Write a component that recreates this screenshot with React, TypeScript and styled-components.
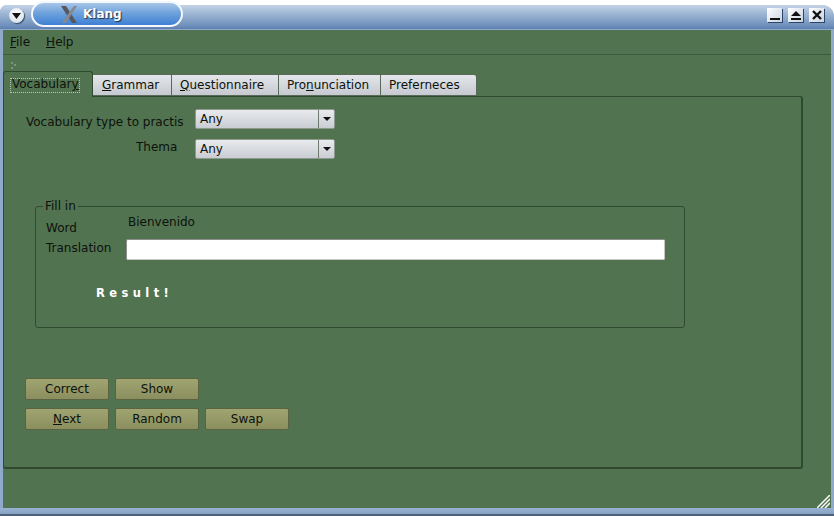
import styled, { createGlobalStyle } from "styled-components";

const GlobalStyle = createGlobalStyle`
  html, body {
    margin: 0;
    padding: 0;
    background: #ffffff;
  }

  body {
    font-family: "DejaVu Sans", sans-serif;
    font-size: 12px;
    color: #0c120c;
  }
`;

const Frame = styled.div`
  width: 834px;
  height: 511px;
  margin-top: 5px;
  display: flex;
  flex-direction: column;
  background: #8fa9cb;
  border-radius: 7px 12px 0 0;
`;

const TitleBar = styled.div`
  height: 24px;
  flex: none;
  display: flex;
  align-items: flex-start;
  padding: 0 10px 0 9px;
  box-sizing: border-box;
  border-radius: 7px 12px 0 0;
  background: linear-gradient(#c4d3e6 0, #a9bfda 6px, #6e8fbb 21px, #5d7fae 24px);
`;

const MenuButton = styled.div`
  width: 15px;
  height: 15px;
  margin-top: 3px;
  flex: none;
  border-radius: 50%;
  display: flex;
  align-items: center;
  justify-content: center;
  background: radial-gradient(circle at 50% 35%, #ffffff, #cfd8e4);
  box-shadow: 1px 1px 1px #334a66;
`;

const TitlePill = styled.div`
  width: 152px;
  height: 26px;
  margin: -4px 0 0 7px;
  flex: none;
  box-sizing: border-box;
  display: flex;
  align-items: center;
  gap: 5px;
  padding: 0 0 0 27px;
  border: 2px solid #f4f8fc;
  border-radius: 13px;
  background: linear-gradient(#a8c6e8, #6ea2dc 45%, #3f80d4);
`;

const TitleText = styled.span`
  font-weight: bold;
  color: #ffffff;
  font-size: 12px;
  text-shadow: 1px 1px 1px #1c2c44;
`;

const TitleButtons = styled.div`
  margin-left: auto;
  display: flex;
  gap: 6px;
  padding-top: 3px;
`;

const TitleButton = styled.div`
  width: 15px;
  height: 14px;
  display: flex;
  align-items: center;
  justify-content: center;
  background: linear-gradient(135deg, #ffffff, #c8d3e2);
  box-shadow: 1px 1px 0 #2d4668;
`;

const Client = styled.div`
  flex: 1;
  margin: 1px 3px 0 3px;
  display: flex;
  flex-direction: column;
  background: #527350;
  min-height: 0;
`;

const MenuBar = styled.div`
  height: 25px;
  flex: none;
  display: flex;
  align-items: center;
  gap: 16px;
  padding: 0 0 0 7px;
  box-sizing: border-box;
  border-bottom: 1px solid #3d5a3c;
`;

const MenuItem = styled.span`
  font-size: 12px;
`;

const Key = styled.span`
  text-decoration: underline;
`;

const ToolHandle = styled.div`
  height: 16px;
  flex: none;
  padding: 4px 0 0 7px;
  box-sizing: border-box;
`;

const TabRow = styled.div`
  display: flex;
  align-items: flex-end;
  height: 26px;
  flex: none;
  margin-bottom: -1px;
  position: relative;
  z-index: 1;
`;

const ActiveTab = styled.div`
  width: 90px;
  height: 26px;
  box-sizing: border-box;
  padding: 6px 0 0 6px;
  background: #527350;
  border: 1px solid #2f4a2f;
  border-bottom: none;
  border-radius: 3px 3px 0 0;
`;

const FocusBox = styled.span`
  display: block;
  height: 15px;
  line-height: 10px;
  padding-left: 1px;
  border: 1px dotted #b9c4b4;
  box-sizing: border-box;
  width: 70px;
  white-space: nowrap;
`;

const Tab = styled.div<{ $w: number; $pad: number }>`
  width: ${({ $w }) => $w}px;
  height: 22px;
  margin-bottom: 1px;
  box-sizing: border-box;
  display: flex;
  align-items: center;
  padding-left: ${({ $pad }) => $pad}px;
  background: linear-gradient(#e4e6ea, #c6c9cf);
  border: 1px solid #5a6a5a;
  border-left: none;

  &:last-child {
    border-radius: 0 3px 0 0;
  }
`;

const Panel = styled.div`
  width: 800px;
  height: 373px;
  flex: none;
  box-sizing: border-box;
  padding: 12px 0 0 21px;
  border: 1px solid #2f4a2f;
  border-right-width: 2px;
  border-bottom-width: 2px;
  border-radius: 0 3px 3px 3px;
`;

const FormGrid = styled.div`
  display: grid;
  grid-template-columns: 169px 140px;
  grid-auto-rows: 20px;
  row-gap: 10px;
  margin-left: 1px;
`;

const FieldLabel = styled.div<{ $indent: number; $raise: number }>`
  padding-left: ${({ $indent }) => $indent}px;
  padding-top: ${({ $raise }) => $raise}px;
  white-space: nowrap;
`;

const Combo = styled.div`
  height: 20px;
  box-sizing: border-box;
  display: flex;
  background: linear-gradient(#e9ebee, #c9ccd2);
  border: 1px solid #8f9a8f;
  border-radius: 2px;
`;

const ComboText = styled.span`
  flex: 1;
  padding: 2px 0 0 4px;
`;

const ComboArrow = styled.span`
  width: 15px;
  border-left: 1px solid #6f7a6f;
  display: flex;
  align-items: center;
  justify-content: center;
`;

const Group = styled.fieldset`
  width: 650px;
  height: 129px;
  margin: 40px 0 0 10px;
  padding: 0;
  box-sizing: border-box;
  border: 1px solid #2f4a2f;
  border-radius: 3px;
  display: block;
`;

const Legend = styled.legend`
  margin-left: 7px;
  padding: 0 2px;
  font-size: 12px;
  line-height: 14px;
`;

const GroupBody = styled.div`
  display: grid;
  grid-template-columns: 80px 539px;
  padding: 0 0 0 10px;
`;

const GroupLabel = styled.div<{ $top: number }>`
  padding-top: ${({ $top }) => $top}px;
  white-space: nowrap;
`;

const WordValue = styled.div`
  padding-top: 2px;
  height: 26px;
  box-sizing: border-box;
  padding-left: 2px;
`;

const TextInput = styled.div`
  height: 21px;
  box-sizing: border-box;
  background: #ffffff;
  border: 1px solid #8d8d8d;
  border-right-color: #c8c8c8;
  border-bottom-color: #c8c8c8;
  border-radius: 2px;
`;

const Result = styled.div`
  grid-column: 1 / 3;
  padding: 26px 0 0 50px;
  font-weight: bold;
  color: #ffffff;
  font-size: 11.5px;
  letter-spacing: 4.4px;
`;

const ButtonStack = styled.div`
  display: flex;
  flex-direction: column;
  gap: 8px;
  margin: 50px 0 0 0;
`;

const ButtonRow = styled.div`
  display: flex;
  gap: 6px;
`;

const ActionButton = styled.button`
  width: 84px;
  height: 22px;
  padding: 0;
  font: inherit;
  color: inherit;
  background: linear-gradient(#a0a470, #8b8f5f);
  border: 1px solid #5c6340;
  border-radius: 2px;
`;

const BottomBorder = styled.div`
  height: 8px;
  flex: none;
  background: linear-gradient(#9ab2d2 0, #86a2c6 6px, #4d6078 6px);
`;

const GripSpot = styled.div`
  height: 0;
  display: flex;
  justify-content: flex-end;
`;

const Grip = styled.svg`
  position: relative;
  top: -13px;
  right: 4px;
  flex: none;
`;

function App() {
  return (
    <>
      <GlobalStyle />
      <Frame>
        <TitleBar>
          <MenuButton>
            <svg width="9" height="6" viewBox="0 0 9 6">
              <path d="M0 0h9L4.5 6z" fill="#111" />
            </svg>
          </MenuButton>
          <TitlePill>
            <svg width="18" height="17" viewBox="0 0 18 17">
              <path d="M1 0h5l11 17h-5z" fill="#55595f" />
              <path d="M14 0h3L6 17H2L8 8z" fill="#868a90" />
            </svg>
            <TitleText>Klang</TitleText>
          </TitlePill>
          <TitleButtons>
            <TitleButton>
              <svg width="10" height="10" viewBox="0 0 10 10">
                <path d="M0 8h10v2H0z" fill="#111" />
              </svg>
            </TitleButton>
            <TitleButton>
              <svg width="10" height="10" viewBox="0 0 10 10">
                <path d="M5 1l5 5H0zM0 8h10v2H0z" fill="#111" />
              </svg>
            </TitleButton>
            <TitleButton>
              <svg width="10" height="10" viewBox="0 0 10 10">
                <path d="M1 1l8 8M9 1L1 9" stroke="#111" strokeWidth="2.4" />
              </svg>
            </TitleButton>
          </TitleButtons>
        </TitleBar>
        <Client>
          <MenuBar>
            <MenuItem>
              <Key>F</Key>ile
            </MenuItem>
            <MenuItem>
              <Key>H</Key>elp
            </MenuItem>
          </MenuBar>
          <ToolHandle>
            <svg width="6" height="8" viewBox="0 0 6 8">
              <path d="M1 0h2v2H1zM4 2h2v2H4zM1 5h2v2H1z" fill="#78977a" />
            </svg>
          </ToolHandle>
          <TabRow>
            <ActiveTab>
              <FocusBox>
                Vocabular<Key>y</Key>
              </FocusBox>
            </ActiveTab>
            <Tab $w={79} $pad={9}>
              <span>
                <Key>G</Key>rammar
              </span>
            </Tab>
            <Tab $w={107} $pad={8}>
              <span>
                <Key>Q</Key>uestionnaire
              </span>
            </Tab>
            <Tab $w={102} $pad={8}>
              <span>
                Pro<Key>n</Key>unciation
              </span>
            </Tab>
            <Tab $w={96} $pad={8}>
              Preferneces
            </Tab>
          </TabRow>
          <Panel>
            <FormGrid>
              <FieldLabel $indent={0} $raise={6}>
                Vocabulary type to practis
              </FieldLabel>
              <Combo>
                <ComboText>Any</ComboText>
                <ComboArrow>
                  <svg width="8" height="4" viewBox="0 0 8 4">
                    <path d="M0 0h8L4 4z" fill="#111" />
                  </svg>
                </ComboArrow>
              </Combo>
              <FieldLabel $indent={110} $raise={1}>
                Thema
              </FieldLabel>
              <Combo>
                <ComboText>Any</ComboText>
                <ComboArrow>
                  <svg width="8" height="4" viewBox="0 0 8 4">
                    <path d="M0 0h8L4 4z" fill="#111" />
                  </svg>
                </ComboArrow>
              </Combo>
            </FormGrid>
            <Group>
              <Legend>Fill in</Legend>
              <GroupBody>
                <GroupLabel $top={8}>Word</GroupLabel>
                <WordValue>Bienvenido</WordValue>
                <GroupLabel $top={2}>Translation</GroupLabel>
                <TextInput />
                <Result>Result!</Result>
              </GroupBody>
            </Group>
            <ButtonStack>
              <ButtonRow>
                <ActionButton>Correct</ActionButton>
                <ActionButton>Show</ActionButton>
              </ButtonRow>
              <ButtonRow>
                <ActionButton>
                  <Key>N</Key>ext
                </ActionButton>
                <ActionButton>Random</ActionButton>
                <ActionButton>Swap</ActionButton>
              </ButtonRow>
            </ButtonStack>
          </Panel>
        </Client>
        <BottomBorder>
          <GripSpot>
            <Grip width="13" height="13" viewBox="0 0 13 13">
              <path d="M0 13L13 0M4 13l9-9M8 13l5-5" stroke="#ffffff" strokeWidth="1.5" />
            </Grip>
          </GripSpot>
        </BottomBorder>
      </Frame>
    </>
  );
}

export default App;
